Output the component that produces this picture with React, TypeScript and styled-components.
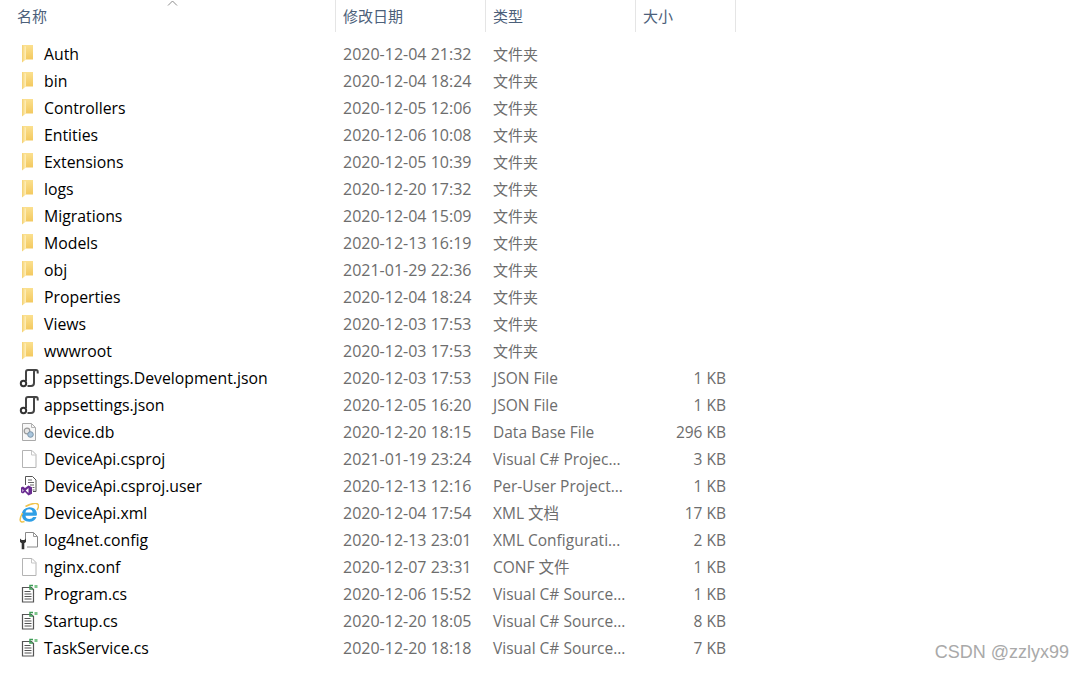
import React from "react";
import styled, { createGlobalStyle } from "styled-components";

const GlobalStyle = createGlobalStyle`
    html, body {
        margin: 0;
        padding: 0;
        background: #fff;
    }
`;

const COLUMNS = "336px 150px 150px 100px";
const FONT = `"Open Sans", "Noto Sans CJK SC", sans-serif`;

const Root = styled.div`
    position: relative;
    width: 1084px;
    height: 673px;
    overflow: hidden;
    font-family: ${FONT};
    font-size: 16px;
`;

const Header = styled.div`
    position: relative;
    display: grid;
    grid-template-columns: ${COLUMNS};
    width: 736px;
    height: 32px;
    margin-bottom: 8px;
`;

const HeaderCell = styled.div`
    display: flex;
    align-items: center;
    height: 32px;
    padding-left: ${props => props.$indent}px;
    padding-bottom: 2px;
    box-sizing: border-box;
    border-right: 1px solid #e5e5e5;
    color: #4c607a;
    font-size: 15px;
`;

const SortArrow = styled.svg`
    position: absolute;
    left: 167px;
    top: 0;
`;

const Row = styled.div`
    display: grid;
    grid-template-columns: ${COLUMNS};
    width: 736px;
    height: 27px;
    align-items: center;
`;

const NameCell = styled.div`
    display: flex;
    align-items: center;
    padding-left: 19px;
    color: #000;
    font-size: 15.8px;
    white-space: nowrap;
`;

const IconSlot = styled.span`
    display: flex;
    width: 20px;
    height: 20px;
    margin-right: 5px;
    flex: none;
`;

const DateCell = styled.div`
    padding-left: 7px;
    color: #6d6d6d;
    white-space: nowrap;
`;

const TypeCell = styled.div`
    padding-left: 7px;
    color: #6d6d6d;
    font-size: ${props => props.$size}px;
    white-space: nowrap;
`;

const SizeCell = styled.div`
    padding-right: 10px;
    color: #6d6d6d;
    font-size: 15.5px;
    text-align: right;
    white-space: nowrap;
`;

const Watermark = styled.div`
    position: absolute;
    right: 15px;
    top: 642px;
    color: #a9a9a9;
    font-family: "Liberation Sans", sans-serif;
    font-size: 18px;
`;

const FolderIcon = () => (
    <svg width="20" height="20" viewBox="0 0 20 20">
        <defs>
            <linearGradient id="folderBack" x1="0" y1="0" x2="0" y2="1">
                <stop offset="0" stopColor="#fbe08f" />
                <stop offset="1" stopColor="#f3c95f" />
            </linearGradient>
            <linearGradient id="folderFront" x1="0" y1="0" x2="1" y2="0">
                <stop offset="0" stopColor="#f4d06f" />
                <stop offset="1" stopColor="#fff0bd" />
            </linearGradient>
        </defs>
        <path d="M3 1h11v14.500H3z" fill="url(#folderBack)" />
        <path d="M3 1l4 1.500V15.500L3 18.500z" fill="url(#folderFront)" />
    </svg>
);

const ConfigIcon = () => (
    <svg width="20" height="20" viewBox="0 0 20 20" fill="none">
        <path d="M7 13V4q0-2 2-2h8" stroke="#444" strokeWidth="2" />
        <path d="M18.700 5.500V3.700q0-1.700-1.700-1.700t-2 1.700V15q0 3-3 3H8.500" stroke="#444" strokeWidth="2" />
        <circle cx="4.500" cy="15.500" r="2.700" stroke="#333" strokeWidth="2" />
    </svg>
);

const DbIcon = () => (
    <svg width="20" height="20" viewBox="0 0 20 20" fill="none">
        <path d="M3.500 1.500h9l4 4v13h-13z" fill="#f8f8f8" stroke="#a9a9a9" />
        <path d="M12.500 1.500v4h4" stroke="#b5b5b5" />
        <circle cx="8" cy="9" r="2.800" fill="#e6e6e6" stroke="#9a9a9a" strokeWidth="1.200" />
        <circle cx="11.500" cy="12.500" r="2.800" fill="#a9c5dc" stroke="#7c94a8" />
    </svg>
);

const BlankIcon = () => (
    <svg width="20" height="20" viewBox="0 0 20 20" fill="none">
        <path d="M3.500 1.500h9.500l4 4v13h-13.500z" fill="#fff" stroke="#b4b4b4" />
        <path d="M12.500 1.500v4.500h4.500" stroke="#c6c6c6" />
    </svg>
);

const VsUserIcon = () => (
    <svg width="20" height="20" viewBox="0 0 20 20" fill="none">
        <path d="M6.500 9V.5h7l3.500 3.500v11.500h-3" fill="#fff" stroke="#555" />
        <path d="M9 4h4M9 6.500h6M11 9h4M13.500 11.500h2M13.500 14h2" stroke="#666" />
        <path d="M9.500 9.500l3.500 1.700v6.600l-3.500 1.700-3.500-3.500-2 1.500-2-1v-5l2-1 2 1.500z" fill="#6a2c91" />
        <path d="M9.500 12v5l-2.800-2.500z" fill="#fff" />
        <path d="M3.300 13l1.500 1.500-1.500 1.500z" fill="#e6daf0" />
    </svg>
);

const IeIcon = () => (
    <svg width="20" height="20" viewBox="0 0 20 20" fill="none">
        <path d="M17.500 12.800H6.500q.5 3.200 3.800 3.200 2.900 0 3.900-2h3.300q-1.700 4.800-7.200 4.800-7 0-7.500-7 0-6.300 7.500-7.500 7 0 7.700 7zM6.500 9.500h7.200q-.5-3.200-3.600-3.200-3.100 0-3.600 3.200z" fill="#2f9fe6" fillRule="evenodd" />
        <path d="M3.500 10C.5 15.500-.5 20.500 5.500 18.500M6.500 3.500C12 .5 19.500-1.500 19.500 3c0 1.500-.5 2.500-1.500 4" stroke="#f0c34e" strokeWidth="1.500" />
    </svg>
);

const ToolIcon = () => (
    <svg width="20" height="20" viewBox="0 0 20 20" fill="none">
        <path d="M6.500 9V2.500h8l4 4v10.500H8" fill="#fff" stroke="#8a8a8a" />
        <path d="M14.500 2.500v4h4" stroke="#9a9a9a" />
        <path d="M1 8.500V12l1.700 1.200v6h2.600v-6L7 12V8.500L5.300 10H2.700z" fill="#333" />
    </svg>
);

const CsIcon = () => (
    <svg width="20" height="20" viewBox="0 0 20 20" fill="none">
        <path d="M3.500 3.500h9l2 2v12.500h-11z" fill="#fff" stroke="#555" strokeWidth="1.200" />
        <path d="M5.500 7.500h6M5.500 10h7M5.500 12.500h7M5.500 15h7" stroke="#555" strokeWidth="1.200" />
        <path d="M14 1.500h-3v3.500h3" stroke="#3f9b57" strokeWidth="1.500" />
        <rect x="15.500" y="1" width="3" height="3" fill="#7cc48a" />
    </svg>
);

const icons = {
    folder: <FolderIcon />,
    config: <ConfigIcon />,
    db: <DbIcon />,
    blank: <BlankIcon />,
    vsuser: <VsUserIcon />,
    ie: <IeIcon />,
    tool: <ToolIcon />,
    cs: <CsIcon />,
};

type IconName = keyof typeof icons;

const files: [IconName, string, string, string, string][] = [
    ["folder", "Auth", "2020-12-04 21:32", "文件夹", ""],
    ["folder", "bin", "2020-12-04 18:24", "文件夹", ""],
    ["folder", "Controllers", "2020-12-05 12:06", "文件夹", ""],
    ["folder", "Entities", "2020-12-06 10:08", "文件夹", ""],
    ["folder", "Extensions", "2020-12-05 10:39", "文件夹", ""],
    ["folder", "logs", "2020-12-20 17:32", "文件夹", ""],
    ["folder", "Migrations", "2020-12-04 15:09", "文件夹", ""],
    ["folder", "Models", "2020-12-13 16:19", "文件夹", ""],
    ["folder", "obj", "2021-01-29 22:36", "文件夹", ""],
    ["folder", "Properties", "2020-12-04 18:24", "文件夹", ""],
    ["folder", "Views", "2020-12-03 17:53", "文件夹", ""],
    ["folder", "wwwroot", "2020-12-03 17:53", "文件夹", ""],
    ["config", "appsettings.Development.json", "2020-12-03 17:53", "JSON File", "1 KB"],
    ["config", "appsettings.json", "2020-12-05 16:20", "JSON File", "1 KB"],
    ["db", "device.db", "2020-12-20 18:15", "Data Base File", "296 KB"],
    ["blank", "DeviceApi.csproj", "2021-01-19 23:24", "Visual C# Projec...", "3 KB"],
    ["vsuser", "DeviceApi.csproj.user", "2020-12-13 12:16", "Per-User Project...", "1 KB"],
    ["ie", "DeviceApi.xml", "2020-12-04 17:54", "XML 文档", "17 KB"],
    ["tool", "log4net.config", "2020-12-13 23:01", "XML Configurati...", "2 KB"],
    ["blank", "nginx.conf", "2020-12-07 23:31", "CONF 文件", "1 KB"],
    ["cs", "Program.cs", "2020-12-06 15:52", "Visual C# Source...", "1 KB"],
    ["cs", "Startup.cs", "2020-12-20 18:05", "Visual C# Source...", "8 KB"],
    ["cs", "TaskService.cs", "2020-12-20 18:18", "Visual C# Source...", "7 KB"],
];

export default function App() {
    return (
        <Root>
            <GlobalStyle />
            <Header>
                <HeaderCell $indent={17}>名称</HeaderCell>
                <HeaderCell $indent={7}>修改日期</HeaderCell>
                <HeaderCell $indent={7}>类型</HeaderCell>
                <HeaderCell $indent={7}>大小</HeaderCell>
                <SortArrow width="11" height="6" viewBox="0 0 11 6" fill="none">
                    <path d="M1 5.500l4.500-4.500 4.500 4.500" stroke="#8c8c8c" />
                </SortArrow>
            </Header>
            {files.map(([icon, name, date, type, size]) => (
                <Row key={name}>
                    <NameCell>
                        <IconSlot>{icons[icon]}</IconSlot>
                        {name}
                    </NameCell>
                    <DateCell>{date}</DateCell>
                    <TypeCell $size={type === "文件夹" ? 15 : 15.5}>{type}</TypeCell>
                    <SizeCell>{size}</SizeCell>
                </Row>
            ))}
            <Watermark>CSDN @zzlyx99</Watermark>
        </Root>
    );
}
